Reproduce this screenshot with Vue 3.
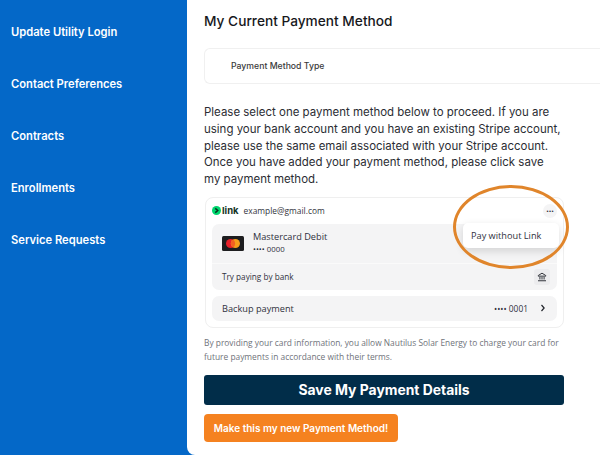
<script setup>
const navItems = ['Update Utility Login', 'Contact Preferences', 'Contracts', 'Enrollments', 'Service Requests']
</script>

<template>
  <div class="page">
    <nav class="sidebar">
      <a v-for="item in navItems" :key="item" class="nav-item">{{ item }}</a>
    </nav>
    <main class="main">
      <h1 class="title">My Current Payment Method</h1>
      <div class="type-box">Payment Method Type</div>
      <p class="intro">Please select one payment method below to proceed. If you are using your bank account and you have an existing Stripe account, please use the same email associated with your Stripe account. Once you have added your payment method, please click save my payment method.</p>

      <section class="card">
        <div class="link-row">
          <span class="link-logo">
            <svg class="link-mark" viewBox="0 0 10 10" width="9" height="9">
              <circle cx="5" cy="5" r="5" fill="#00d66f" />
              <path d="M3.600 2.600 6.400 5 3.600 7.400" fill="none" stroke="#06331f" stroke-width="1.600" />
            </svg>
            <span class="link-word">link</span>
          </span>
          <span class="email">example@gmail.com</span>
          <span class="more">···</span>
        </div>

        <div class="methods">
          <div class="method-main">
            <svg class="mc" viewBox="0 0 22 15" width="22" height="15">
              <rect width="22" height="15" rx="1.500" fill="#1d1d1f" />
              <circle cx="8.600" cy="7.500" r="4.600" fill="#e8202a" />
              <circle cx="13.400" cy="7.500" r="4.600" fill="#f79e1b" />
              <path d="M11 3.600a4.600 4.600 0 0 1 0 7.800 4.600 4.600 0 0 1 0-7.800Z" fill="#f26122" />
            </svg>
            <div class="method-text">
              <div class="method-name">Mastercard Debit</div>
              <div class="method-num">•••• 0000</div>
            </div>
          </div>
          <div class="method-bank">
            <span>Try paying by bank</span>
            <span class="bank-icon">
              <svg viewBox="0 0 12 12" width="10" height="10" fill="none" stroke="#33363d" stroke-width="1.200">
                <path d="M1.500 4.200 6 1.400l4.500 2.800v.8h-9z" />
                <path d="M3.500 6v3M6 6v3M8.500 6v3" />
                <path d="M1.200 10.500h9.600" />
              </svg>
            </span>
          </div>
        </div>

        <div class="backup">
          <span>Backup payment</span>
          <span class="backup-end">
            <span class="backup-num">•••• 0001</span>
            <svg viewBox="0 0 8 10" width="6" height="8" fill="none" stroke="#22252b" stroke-width="1.600">
              <path d="M2 1l3.500 4L2 9" />
            </svg>
          </span>
        </div>

        <div class="popover">Pay without Link</div>
      </section>

      <p class="terms">By providing your card information, you allow Nautilus Solar Energy to charge your card for future payments in accordance with their terms.</p>

      <button class="save">Save My Payment Details</button>
      <button class="make">Make this my new Payment Method!</button>

      <div class="oval"></div>
    </main>
  </div>
</template>

<style scoped>
.page {
  display: flex;
  width: 600px;
  height: 455px;
  overflow: hidden;
  background: #0468c8;
  font-family: Inter, "Open Sans", sans-serif;
}
.sidebar {
  width: 187px;
  flex: none;
  display: flex;
  flex-direction: column;
  gap: 35px;
  padding: 24px 0 0 11px;
  box-sizing: border-box;
}
.nav-item {
  color: #fff;
  font-size: 11.200px;
  font-weight: 600;
  line-height: 17px;
}
.main {
  position: relative;
  flex: 1;
  background: #fff;
  padding: 0 36px 0 17px;
  border-bottom-left-radius: 8px;
}
.title {
  margin: 13px 0 0;
  font-size: 13.700px;
  font-weight: 500;
  line-height: 17px;
  color: #17181c;
}
.type-box {
  margin: 18px -36px 0 0;
  height: 34px;
  display: flex;
  align-items: center;
  padding-left: 26px;
  border: 1px solid #f0f0f0;
  border-right: 0;
  border-radius: 6px 0 0 6px;
  font-size: 8.700px;
  font-weight: 500;
  color: #3a3a3a;
}
.intro {
  margin: 20px 0 0;
  max-width: 357px;
  font-size: 11.480px;
  line-height: 16.800px;
  color: #2b2d33;
}
.card {
  position: relative;
  margin: 9px 0 0 1px;
  height: 131px;
  box-sizing: border-box;
  border: 1px solid #efefef;
  border-radius: 8px;
  padding: 0 6px;
  color: #30313d;
  font-family: "Open Sans", sans-serif;
}
.link-row {
  display: flex;
  align-items: center;
  height: 26px;
  font-size: 8.400px;
}
.link-logo {
  display: flex;
  align-items: center;
  gap: 1px;
}
.link-word {
  font-family: Inter, sans-serif;
  font-size: 9.500px;
  font-weight: 700;
  color: #14321f;
}
.email {
  margin-left: 5px;
  color: #33353d;
}
.more {
  margin-left: auto;
  width: 14px;
  height: 14px;
  border-radius: 50%;
  background: #f4f4f5;
  text-align: center;
  font-size: 9px;
  font-weight: 700;
  line-height: 13px;
}
.methods {
  background: #f4f4f5;
  border-radius: 7px;
}
.method-main {
  height: 39px;
  display: flex;
  align-items: center;
  padding-left: 10px;
  gap: 9px;
  border-bottom: 1px solid #fafafa;
}
.mc {
  flex: none;
}
.method-name {
  font-size: 9.200px;
  line-height: 12px;
}
.method-num {
  font-size: 7.800px;
  line-height: 12px;
}
.method-bank {
  height: 26px;
  display: flex;
  align-items: center;
  justify-content: space-between;
  padding: 0 10px;
  font-size: 8.200px;
}
.bank-icon {
  display: flex;
  padding: 3px;
  margin-right: -3px;
  border-radius: 3px;
  background: #ececee;
}
.backup {
  margin-top: 6px;
  height: 25px;
  display: flex;
  align-items: center;
  justify-content: space-between;
  padding: 0 11px 0 10px;
  background: #f4f4f5;
  border-radius: 7px;
  font-size: 9.200px;
}
.backup-end {
  display: flex;
  align-items: center;
  gap: 12px;
}
.backup-num {
  font-size: 8.400px;
}
.popover {
  position: absolute;
  top: 25px;
  left: 257px;
  width: 96px;
  height: 25px;
  box-sizing: border-box;
  padding-left: 8px;
  background: #fff;
  border-radius: 5px;
  box-shadow: 0 3px 8px rgba(0, 0, 0, 0.14);
  font-size: 9.200px;
  line-height: 25px;
  color: #30313d;
  white-space: nowrap;
}
.terms {
  margin: 8px 0 0;
  font-family: "Open Sans", sans-serif;
  font-size: 8.400px;
  line-height: 14px;
  color: #70737a;
}
.save {
  display: block;
  width: 360px;
  height: 30px;
  margin-top: 11px;
  border: 0;
  border-radius: 3px;
  background: #012d49;
  color: #fff;
  font-family: inherit;
  font-size: 13.900px;
  font-weight: 700;
}
.make {
  display: block;
  width: 194px;
  height: 28px;
  margin-top: 9px;
  border: 0;
  border-radius: 4px;
  background: #f58220;
  color: #fff;
  font-family: inherit;
  font-size: 10px;
  font-weight: 600;
}
.oval {
  position: absolute;
  left: 266px;
  top: 185px;
  width: 110px;
  height: 78px;
  border: 3.500px solid #e0852b;
  border-radius: 50%;
  pointer-events: none;
}
</style>
